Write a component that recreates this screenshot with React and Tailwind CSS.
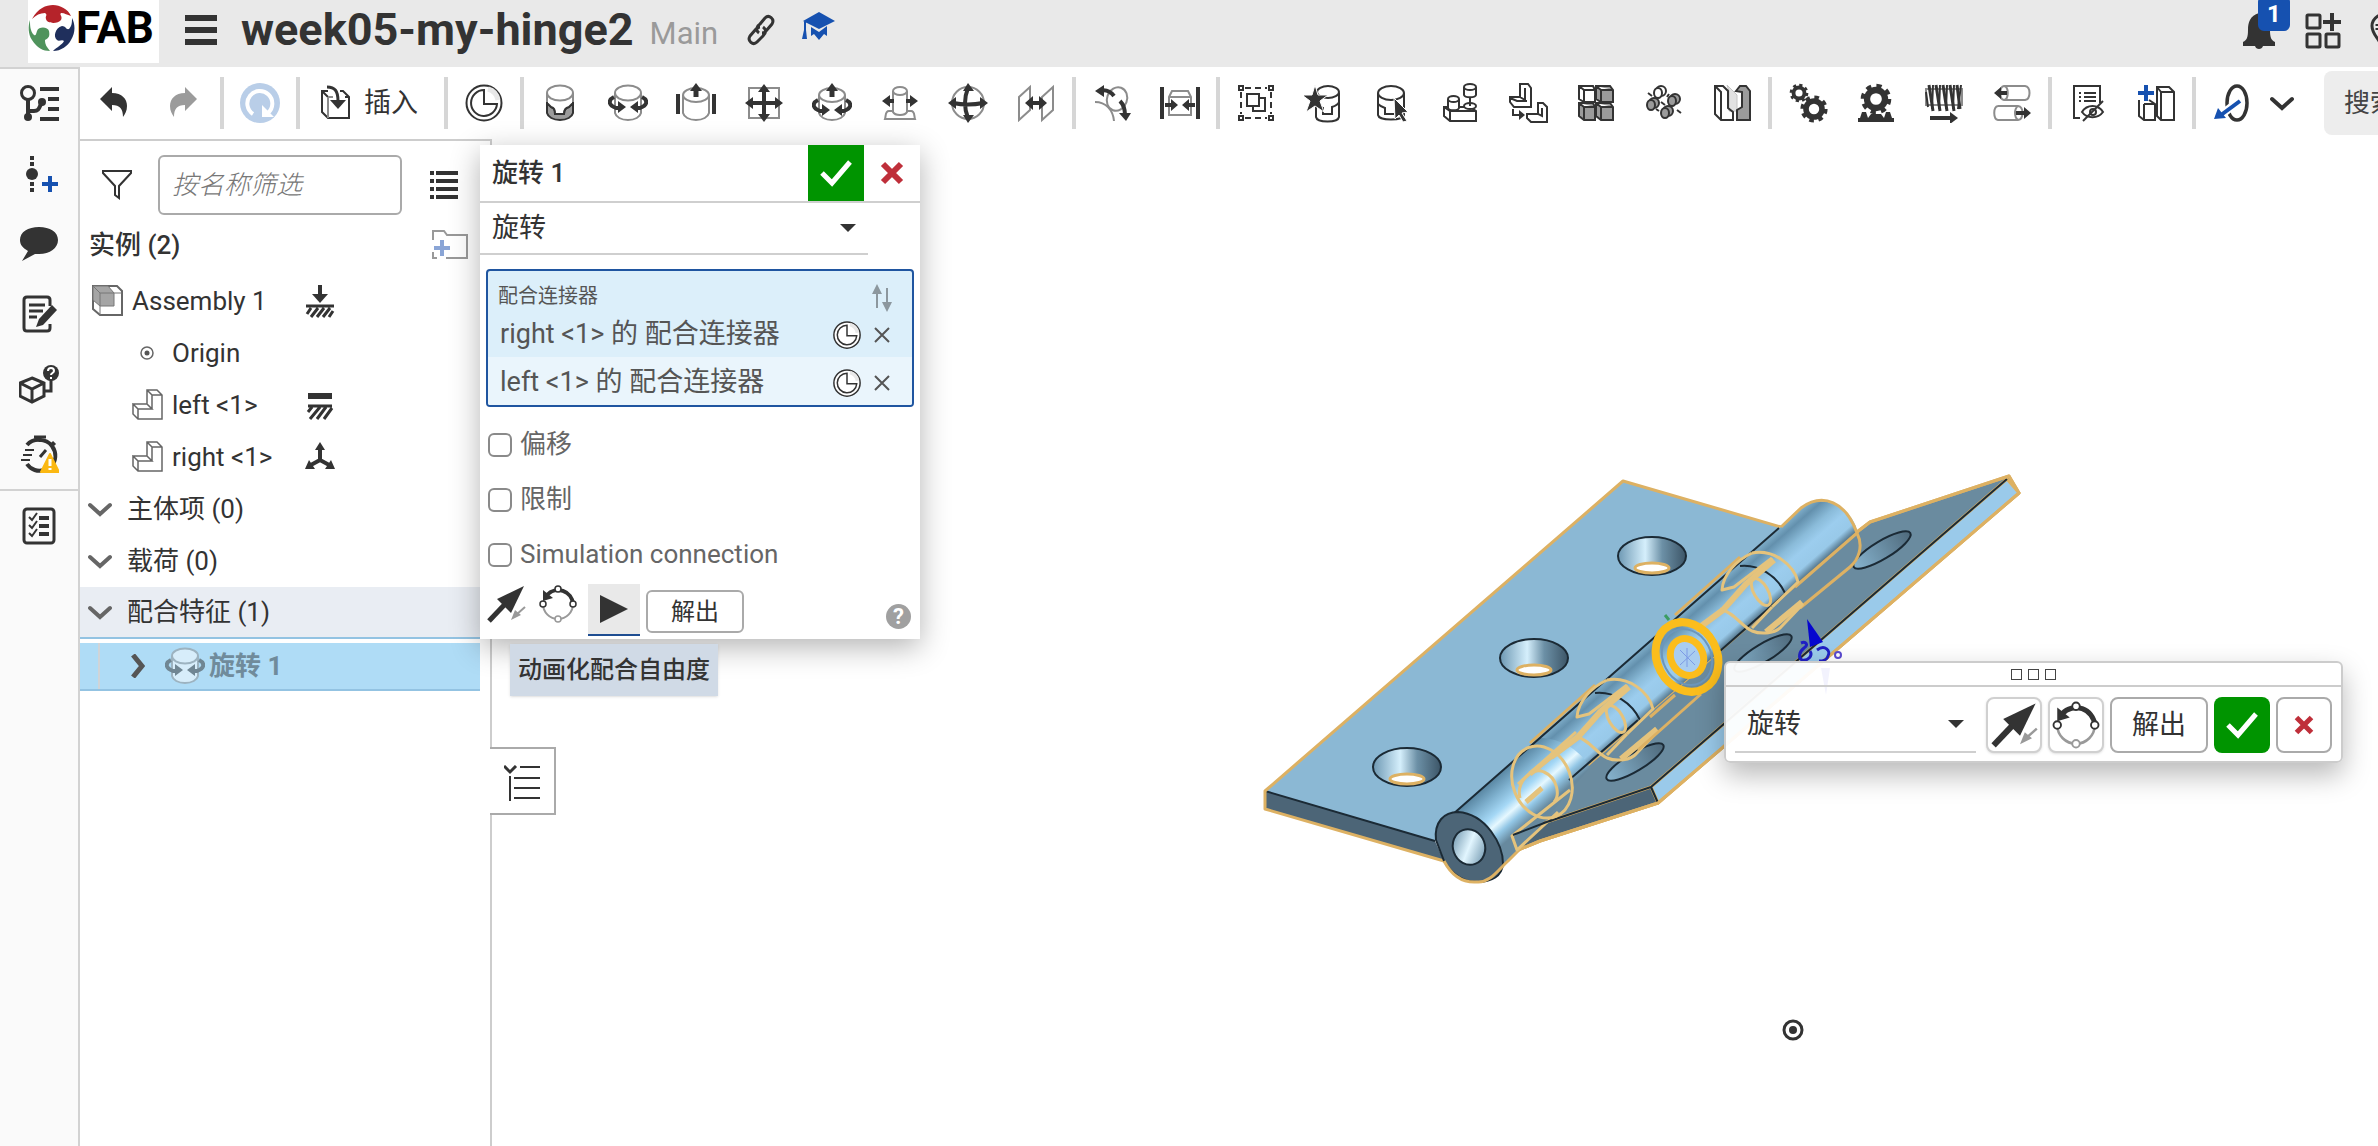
import { useState } from 'react';

const DARK = '#333333';
const GREY = '#8c8c8c';
const BLUE = '#1651b0';

const Icon = ({ children, className = 'size-10', box = '0 0 40 40' }) => (
  <svg viewBox={box} className={`shrink-0 ${className}`} fill="none" stroke={DARK} strokeWidth="2" aria-hidden="true">
    {children}
  </svg>
);

/* ---------- toolbar icons ---------- */

const UndoIcon = () => (
  <Icon><path d="M4 16 L16 4 V10 C26 10 31 16 31 23 C31 28 29 31 27 34 C27 26 24 22 16 22 V28 Z" fill={DARK} stroke="none" /></Icon>
);

const RedoIcon = () => (
  <Icon><path d="M33 16 L21 4 V10 C11 10 6 16 6 23 C6 28 8 31 10 34 C10 26 13 22 21 22 V28 Z" fill="#9b9b9b" stroke="none" /></Icon>
);

const RefreshIcon = () => (
  <Icon>
    <circle cx="20" cy="20" r="20" fill="#b9cee8" stroke="none" />
    <path d="M13 31 A12.5 12.5 0 1 1 28 30" stroke="#fff" strokeWidth="4" />
    <path d="M22 22 V34 H34 Z" fill="#fff" stroke="none" />
  </Icon>
);

const InsertIcon = () => (
  <Icon>
    <path d="M12 8 H6 V29 L12 35 H33 V14 L27 8 H24 M6 8 L12 14 M29 14 H33" />
    <path d="M12 14 V35 M12 14 H17" stroke={GREY} />
    <path d="M11 4 C19 4 22 8 22 18" strokeWidth="3" />
    <path d="M14 17 H30 L22 26 Z" fill={DARK} stroke="none" />
  </Icon>
);

const ConnectorIcon = ({ className }) => (
  <Icon className={className}>
    <circle cx="20" cy="20" r="17.5" fill="#fff" />
    <path d="M24 6 A14 14 0 0 1 34 17" stroke="#e8e8e8" strokeWidth="5" />
    <path d="M20 7 A13 13 0 1 0 33 21 H20 Z" />
  </Icon>
);

const FastenedIcon = () => (
  <Icon>
    <path d="M7 20 L11 24 C14 25 15 26 15 31 H24 C24 26 26 25 29 24 L33 20 V30 C32 34 27 37 20 37 S8 34 7 30 Z" fill="#9b9b9b" />
    <path d="M7 10 V20 L11 24 C14 25 15 26 15 31 H24 C24 26 26 25 29 24 L33 20 V10" fill="#fff" />
    <ellipse cx="20" cy="10" rx="13" ry="7.5" stroke={GREY} fill="#fff" />
    <path d="M7 10 V19 M33 10 V19" stroke={GREY} />
  </Icon>
);

const RevoluteIcon = () => (
  <Icon>
    <path d="M7 10 V30 C8 34 13 37 20 37 S32 34 33 30 V10" stroke={GREY} fill="#fff" />
    <ellipse cx="20" cy="10" rx="13" ry="7.5" stroke={GREY} fill="#fff" />
    <path d="M6 14 C0 17 0 22 8 25 L12 25 M34 14 C40 17 40 22 32 25 L28 25" strokeWidth="4" />
    <path d="M10 18 L18 24 L10 30 Z M30 18 L22 24 L30 30 Z" fill={DARK} stroke="none" />
  </Icon>
);

const SliderIcon = () => (
  <Icon>
    <path d="M7 12 V30 C8 34 13 37 20 37 S32 34 33 30 V12" stroke={GREY} />
    <ellipse cx="20" cy="12" rx="13" ry="7" stroke={GREY} />
    <path d="M2 11 V31 M38 11 V31" strokeWidth="4" />
    <path d="M20 14 V6" strokeWidth="5" />
    <path d="M14 8 L20 0 L26 8 Z" fill={DARK} stroke="none" />
  </Icon>
);

const PlanarIcon = () => (
  <Icon>
    <path d="M5 5 H35 V35 H5 Z" stroke={GREY} />
    <path d="M20 6 V34 M6 20 H34" strokeWidth="4" />
    <path d="M20 1 L26 9 H14 Z M20 39 L26 31 H14 Z M1 20 L9 14 V26 Z M39 20 L31 14 V26 Z" fill={DARK} stroke="none" />
  </Icon>
);

const CylindricalIcon = () => (
  <Icon>
    <path d="M7 12 V30 C8 34 13 37 20 37 S32 34 33 30 V12" stroke={GREY} />
    <ellipse cx="20" cy="12" rx="13" ry="7" stroke={GREY} />
    <path d="M6 17 C0 20 0 25 8 28 L12 28 M34 17 C40 20 40 25 32 28 L28 28" strokeWidth="4" />
    <path d="M10 21 L18 27 L10 33 Z M30 21 L22 27 L30 33 Z M14 8 L20 0 L26 8 Z" fill={DARK} stroke="none" />
    <path d="M20 14 V6" strokeWidth="5" />
  </Icon>
);

const PinSlotIcon = () => (
  <Icon>
    <path d="M13 28 H9 C5 28 6 33 5 36 H35 C34 33 35 28 31 28 H27" stroke={GREY} />
    <path d="M13 8 V29 C15 33 25 33 27 29 V8" stroke={GREY} />
    <ellipse cx="20" cy="8" rx="7" ry="4" stroke={GREY} />
    <path d="M6 18 H14 M26 18 H34" strokeWidth="4" />
    <path d="M2 18 L10 12 V24 Z M38 18 L30 12 V24 Z" fill={DARK} stroke="none" />
  </Icon>
);

const BallIcon = () => (
  <Icon>
    <circle cx="20" cy="20" r="16" stroke={GREY} />
    <path d="M20 5 C16 15 16 25 20 35 M5 20 C15 22 25 22 35 20" strokeWidth="4" />
    <path d="M20 0 L26 8 H15 Z M20 40 L26 32 H15 Z M0 20 L8 14 V26 Z M40 20 L32 14 V26 Z" fill={DARK} stroke="none" />
  </Icon>
);

const ParallelIcon = () => (
  <Icon>
    <path d="M3 14 L14 4 V27 L3 37 Z M26 14 L37 4 V27 L26 37 Z" stroke={GREY} />
    <path d="M14 20 H28" strokeWidth="4" />
    <path d="M9 20 L17 13 V27 Z M31 20 L23 13 V27 Z" fill={DARK} stroke="none" />
  </Icon>
);

const TangentIcon = () => (
  <Icon>
    <ellipse cx="25" cy="16" rx="10" ry="12" stroke={GREY} transform="rotate(20 25 16)" />
    <path d="M3 19 C14 19 21 27 22 38" stroke={GREY} />
    <path d="M7 8 C14 6 19 9 22 13 M28 18 C32 22 33 27 33 32" strokeWidth="4" />
    <path d="M3 8 L12 2 V14 Z M27 30 H39 L34 38 Z" fill={DARK} stroke="none" />
  </Icon>
);

const WidthIcon = () => (
  <Icon>
    <path d="M2 4 V36 M38 4 V36" strokeWidth="4" />
    <path d="M9 14 L12 8 H28 L31 14 V32 H9 Z M9 14 H31" stroke={GREY} />
    <path d="M5 22 H13 M35 22 H27" strokeWidth="4" />
    <path d="M18 22 L11 16 V28 Z M22 22 L29 16 V28 Z" fill={DARK} stroke="none" />
  </Icon>
);

const GroupIcon = () => (
  <Icon>
    <path d="M9 5 H31 M9 35 H31 M5 9 V31 M35 9 V31" strokeDasharray="6 4" />
    <path d="M3 3 H7 V7 H3 Z M33 3 H37 V7 H33 Z M3 33 H7 V37 H3 Z M33 33 H37 V37 H33 Z" fill="#fff" />
    <path d="M17 15 H29 V28 H17 Z" />
    <path d="M11 11 H23 V23 H11 Z" fill="#fff" />
  </Icon>
);

const NamedPositionIcon = () => (
  <Icon>
    <path d="M12 10 V34 C13 40 34 40 35 34 V10" />
    <ellipse cx="24" cy="9" rx="11" ry="6" />
    <path d="M35 19 C34 22 31 23 28 24 V31 H19 V25 C15 24 13 23 12 21" />
    <path d="M11 2 L14 12 L24 12 L16 18 L20 29 L11 23 L2 29 L6 18 L-2 12 L8 12 Z" fill={DARK} stroke="#fff" strokeWidth="1" />
  </Icon>
);

const SelectPartIcon = () => (
  <Icon>
    <path d="M6 10 V32 C7 38 31 38 32 32 V10" />
    <ellipse cx="19" cy="10" rx="13" ry="7" />
    <path d="M6 21 C8 23 10 24 13 25 V31 H22" />
    <path d="M22 15 L36 29 L30 30 L35 38 L31 39 L27 32 L23 36 Z" fill={DARK} stroke="#fff" strokeWidth="1" />
  </Icon>
);

const ReplicateIcon = () => (
  <Icon>
    <path d="M4 24 H30 L36 28 V38 H10 L4 33 Z M4 24 L10 28 H36 M10 28 V38" />
    <path d="M8 16 V25 C9 28 18 28 19 25 V16" fill="#fff" />
    <ellipse cx="13.5" cy="16" rx="5.5" ry="3" fill="#fff" />
    <path d="M24 4 V12 C25 15 35 15 36 12 V4" fill="#fff" />
    <ellipse cx="30" cy="4" rx="6" ry="3" fill="#fff" />
    <ellipse cx="30" cy="23" rx="6" ry="3" fill="#fff" />
    <path d="M30 15 V23" />
  </Icon>
);

const PatternIcon = () => (
  <Icon>
    <path d="M12 1 H20 L23 5 V24 H6 L2 19 V14 H12 Z M12 1 V14 L17 17 V5 M2 15 L9 18 H19" />
    <path d="M30 20 H35 L39 24 V39 H23 L19 35 V31 H30 Z M30 20 V31 L34 33 V25" />
    <path d="M5 26 V32 H12" />
    <path d="M11 27 L17 32 L11 37 Z" fill={DARK} stroke="none" />
  </Icon>
);

const LinearPatternIcon = () => (
  <Icon>
    <path d="M3 3 H17 L19 7 V19 H8 L3 16 Z M3 3 L8 7 H19 M8 7 V19" fill="#fff" />
    <path d="M20 3 H34 L37 7 V19 H25 L20 16 Z M20 3 L25 7 H37 M25 7 V19" fill="#9b9b9b" />
    <path d="M3 20 H17 L19 24 V37 H8 L3 33 Z M3 20 L8 24 H19 M8 24 V37" fill="#9b9b9b" />
    <path d="M20 20 H34 L37 24 V37 H25 L20 33 Z M20 20 L25 24 H37 M25 24 V37" fill="#9b9b9b" />
  </Icon>
);

const CircularPatternIcon = () => (
  <Icon>
    {[[15, 9, '#fff'], [29, 17, '#9b9b9b'], [8, 21, '#9b9b9b'], [22, 29, '#9b9b9b']].map(([x, y, fill]) => (
      <g key={x} fill={fill}>
        <ellipse cx={x + 2} cy={y - 1} rx="5" ry="5" />
        <ellipse cx={x - 1} cy={y + 1} rx="4" ry="5" />
      </g>
    ))}
    <path d="M4 10 L8 13 M17 19 L21 22 M33 27 L37 30 M23 14 L25 11 M12 26 L15 28" />
  </Icon>
);

const ExplodedIcon = () => (
  <Icon>
    <path d="M15 2 L25 12 V28 H17 V8 Z" fill="#e2e2e2" stroke="#c4c4c4" strokeWidth="1" />
    <path d="M3 3 H11 L16 8 V25 L21 29 V37 H9 L3 31 Z M3 3 L9 9 V37" />
    <path d="M24 8 L28 3 H34 L38 8 V37 H25 V27 L30 24 V9 Z" fill="#9b9b9b" />
  </Icon>
);

// teeth are a dashed ring around the gear body
const Gear = ({ x, y, r }) => (
  <g fill="none">
    <circle cx={x} cy={y} r={r} strokeWidth={r * 0.7} />
    <circle cx={x} cy={y} r={r * 1.45} strokeWidth={r * 0.5} strokeDasharray={`${r * 0.57} ${r * 0.569}`} />
  </g>
);

const GearIcon = () => (
  <Icon><Gear x={11} y={10} r={5.5} /><Gear x={26} y={26} r={8} /></Icon>
);

const RackIcon = () => (
  <Icon>
    <Gear x={20} y={16} r={9} />
    <path d="M2 37 H38" strokeWidth="4" />
    <path d="M4 35 L6 29 H10 L12 35 L15 31 H25 L28 35 L30 29 H34 L36 35 Z" fill={DARK} stroke="none" />
  </Icon>
);

const ScrewIcon = () => (
  <Icon>
    <path d="M2 6 H38 V22 L2 22 Z" stroke={GREY} />
    <path d="M5 2 L9 28 M12 2 L16 28 M19 2 L23 28 M26 2 L30 28 M33 2 L36 26" strokeWidth="3" />
    <path d="M9 2 L8 26 M16 2 L15 26 M23 2 L22 26 M30 2 L29 26 M37 2 L34 26 M2 9 L4 24" />
    <path d="M6 35 H28" strokeWidth="4" />
    <path d="M26 29 L34 35 L26 41 Z" fill={DARK} stroke="none" />
  </Icon>
);

const LinearRelationIcon = () => (
  <Icon>
    <path d="M12 3 H33 C39 4 39 16 33 17 H12 C7 16 7 4 12 3 C17 4 17 16 12 17" stroke={GREY} />
    <path d="M6 23 H26 C32 24 32 36 26 37 H6 C1 36 1 24 6 23 M26 23 C22 26 22 34 26 37" stroke={GREY} />
    <path d="M8 10 H15 M24 30 H34" strokeWidth="4" />
    <path d="M2 10 L9 4 V16 Z M39 30 L32 24 V36 Z" fill={DARK} stroke="none" />
  </Icon>
);

const HiddenListIcon = () => (
  <Icon>
    <path d="M12 35 H6 V3 H32 V20" />
    <path d="M11 10 H13 M16 10 H28 M11 14 H13 M16 14 H28 M11 18 H13 M16 18 H28" />
    <path d="M14 29 C19 21 30 21 35 29 C30 36 19 36 14 29 Z" />
    <circle cx="25" cy="29" r="3" />
    <path d="M35 18 L15 38" />
  </Icon>
);

const ConfigurationIcon = () => (
  <Icon>
    <path d="M3 17 V33 L8 37 H19 V21 L13 17 M8 21 H19 M8 21 V37" />
    <path d="M21 4 H33 L38 9 V37 H25 L21 33 Z M25 9 H38 M25 9 V37 M21 4 L25 9" />
    <path d="M10 2 V18 M2 10 H18" stroke={BLUE} strokeWidth="4" />
  </Icon>
);

const MeasureIcon = () => (
  <Icon>
    <ellipse cx="25" cy="20" rx="10" ry="17" strokeWidth="3.5" />
    <path d="M27 18 L9 32" stroke="#fff" strokeWidth="8" />
    <path d="M28 18 L9 32" stroke={BLUE} strokeWidth="4" />
    <path d="M2 36 L6 25 L14 35 Z" fill={BLUE} stroke="none" />
  </Icon>
);

const ChevronDown = ({ className = 'size-6', color = '#666666' }) => (
  <svg viewBox="0 0 24 24" className={`shrink-0 ${className}`} fill="none" stroke={color} strokeWidth="4" strokeLinecap="round" aria-hidden="true">
    <path d="M2 8 L12 17 L22 8" />
  </svg>
);

/* ---------- side rail icons ---------- */

const TreeIcon = () => (
  <Icon>
    <circle cx="9" cy="9" r="6.5" strokeWidth="3" />
    <path d="M9 16 V32 M9 27 H15 C20 27 20 24 22 20" strokeWidth="4" />
    <circle cx="9" cy="33" r="4" fill={DARK} stroke="none" />
    <circle cx="23" cy="18" r="4" fill={DARK} stroke="none" />
    <path d="M21 5 H41 M29 15 H41 M29 25 H41 M21 35 H41" strokeWidth="4" />
  </Icon>
);

const AddFeatureIcon = () => (
  <Icon>
    <path d="M13 2 V6 M13 8 V12 M13 28 V32 M13 34 V38" strokeWidth="4" />
    <circle cx="13" cy="20" r="6" fill={DARK} stroke="none" />
    <path d="M31 22 V38 M23 30 H39" stroke={BLUE} strokeWidth="4" />
  </Icon>
);

const CommentIcon = () => (
  <Icon>
    <path d="M20 3 C31 3 39 8 39 16 C39 24 31 30 20 30 L16 30 L3 37 L9 27 C4 24 1 21 1 16 C1 8 9 3 20 3 Z" fill={DARK} stroke="none" />
  </Icon>
);

const NoteIcon = () => (
  <Icon>
    <path d="M31 12 V6 C31 4 30 3 28 3 H8 C6 3 5 4 5 6 V34 C5 36 6 37 8 37 H28 C30 37 31 36 31 34 V30" strokeWidth="3" />
    <path d="M10 11 H26 M10 17 H24 M10 23 H18" strokeWidth="3" />
    <path d="M33 11 L38 16 L24 31 L17 33 L20 25 Z" fill={DARK} stroke="none" />
  </Icon>
);

const CubeHelpIcon = () => (
  <Icon>
    <path d="M13 14 L25 19 V32 L13 38 L1 32 V19 Z M1 19 L13 25 L25 19 M13 25 V38" strokeWidth="3" />
    <path d="M32 16 V27 H25" strokeWidth="3" />
    <circle cx="32" cy="9" r="8" fill={DARK} stroke="none" />
    <path d="M29 7 C29 3 35 3 35 7 C35 9 32 9 32 11 M32 13 V15" stroke="#fff" />
  </Icon>
);

const StopwatchIcon = () => (
  <Icon>
    <path d="M15 3 H27 M21 3 V8 M33 8 L36 11" strokeWidth="3" />
    <path d="M8 11 C14 4 27 4 33 12 C38 19 37 27 32 33 M8 30 C12 36 19 38 25 36" strokeWidth="4" />
    <path d="M6 16 H15 M4 21 H13 M2 26 H11" />
    <path d="M21 23 L27 16" strokeWidth="3" />
    <path d="M31 20 L40 38 H22 Z" fill="#fbb812" stroke="#fbb812" strokeLinejoin="round" />
    <path d="M31 25 V32 M31 34 V36" stroke="#fff" strokeWidth="3" />
  </Icon>
);

const ChecklistIcon = () => (
  <Icon>
    <rect x="5" y="3" width="30" height="34" rx="3" strokeWidth="3" />
    <path d="M20 12 H30 M20 20 H30 M20 28 H30" strokeWidth="4" />
    <path d="M10 11 L13 14 L18 7 M10 19 L13 22 L18 15 M10 27 L13 30 L18 23" />
  </Icon>
);

/* ---------- tree and dialog icons ---------- */

const PartIcon = () => (
  <Icon className="size-8" box="0 0 32 32">
    <path d="M1 15 L6 20 H20 L15 15 Z M15 1 H25 L30 6 V30 H6 L1 25 V15 H15 Z M15 1 L20 6 V20 M20 6 H30 M6 20 V30" stroke="#666" strokeWidth="1.5" />
  </Icon>
);

const AssemblyIcon = () => (
  <Icon className="size-8" box="0 0 32 32">
    <path d="M1 1 H25 L30 6 V30 H8 L1 24 Z" stroke="#666" />
    <path d="M1 1 H16 L22 8 V21 H8 L1 15 Z" fill="#a5a5a5" stroke="#777" strokeWidth="1" />
    <path d="M1 1 L8 8 H30 M8 8 V30" stroke="#777" strokeWidth="1" />
  </Icon>
);

const Hatch = ({ y }) => (
  <path d={`M2 ${y + 8} L6 ${y + 2} M6 ${y + 11} L13 ${y + 2} M12 ${y + 11} L19 ${y + 2} M18 ${y + 11} L25 ${y + 2} M24 ${y + 11} L28 ${y + 5} M1 ${y} H29`} strokeWidth="3" />
);

const GroundIcon = () => (
  <Icon className="h-[34px] w-[30px]" box="0 0 30 34">
    <path d="M15 1 V11" strokeWidth="4" />
    <path d="M7 10 H23 L15 19 Z" fill={DARK} stroke="none" />
    <Hatch y={22} />
  </Icon>
);

const FixedIcon = () => (
  <Icon className="h-[34px] w-[30px]" box="0 0 30 34">
    <path d="M3 8 H27" strokeWidth="6" />
    <path d="M3 24 L7 19 M5 31 L15 19 M12 31 L21 19 M19 31 L27 20 M3 18 H27" strokeWidth="3" />
  </Icon>
);

const FreeIcon = () => (
  <Icon className="h-[34px] w-[30px]" box="0 0 30 34">
    <path d="M15 6 V20 L4 26 M15 20 L26 26" strokeWidth="4" />
    <path d="M15 2 L20 10 H10 Z M0 29 L4 20 L10 29 Z M30 29 L26 20 L20 29 Z" fill={DARK} stroke="none" />
  </Icon>
);

const FlipIcon = ({ className = 'size-10' }) => (
  <Icon className={className}>
    <path d="M3 37 L22 17" strokeWidth="5" />
    <path d="M38 2 L11 15 L25 29 Z" fill={DARK} stroke="none" />
    <path d="M39 23 L30 31" stroke="#999" />
    <path d="M25 36 L29 26 L35 31 Z" fill="#999" stroke="none" />
  </Icon>
);

const ReorientIcon = ({ className = 'size-10' }) => (
  <Icon className={className}>
    <path d="M5 20 A15 15 0 0 0 35 20" stroke="#999" />
    <path d="M35 20 A15 15 0 0 0 9 11" strokeWidth="4" />
    <path d="M5 17 V6 L15 14 Z" fill={DARK} stroke="none" />
    <g fill="#fff" strokeWidth="1.5">
      <circle cx="20" cy="5" r="3" /><circle cx="5" cy="20" r="3" /><circle cx="35" cy="20" r="3" /><circle cx="20" cy="35" r="3" stroke="#999" />
    </g>
  </Icon>
);

const CheckMark = () => (
  <Icon className="size-8" box="0 0 32 32"><path d="M2 16 L12 26 L30 5" stroke="#fff" strokeWidth="5" /></Icon>
);

const CrossMark = ({ className = 'size-6' }) => (
  <Icon className={className} box="0 0 24 24"><path d="M3 3 L21 21 M21 3 L3 21" stroke="#bf2f3a" strokeWidth="6" /></Icon>
);

const Caret = () => (
  <svg viewBox="0 0 16 8" className="pointer-events-none h-2 w-4 shrink-0" aria-hidden="true"><path d="M0 0 H16 L8 8 Z" fill={DARK} /></svg>
);

/* ---------- page parts ---------- */

const FabLogo = () => (
  <svg viewBox="0 0 48 48" className="size-12 shrink-0" aria-hidden="true">
    <path d="M4 15 C10 4 18 1 25 1 C32 1 40 5 43 12 C39 11 37 9 33 9 C31 11 35 12 33 16 C30 20 19 20 18 15 C17 12 20 11 17 9 C12 9 8 11 4 15 Z" fill="#b5232a" />
    <path d="M2 16 C0 22 0 30 4 36 C9 44 15 47 22 47 C19 43 17 41 17 36 C21 34 22 32 21 27 C20 23 11 22 9 27 C8 30 8 32 6 31 C2 27 2 21 2 16 Z" fill="#4f935c" />
    <path d="M44 14 C47 20 48 28 43 36 C40 42 33 47 25 47 C29 43 34 41 36 37 C34 35 31 38 29 36 C25 33 27 24 34 22 C38 22 38 26 41 25 C44 22 44 18 44 14 Z" fill="#1f2f5c" />
  </svg>
);

const Header = () => (
  <header className="flex h-[67px] shrink-0 items-start overflow-hidden bg-[#e9e9e9]">
    <a href="#home" className="ml-[28px] flex h-[63px] w-[131px] shrink-0 items-center overflow-hidden bg-white pb-2 text-[44px] leading-none font-bold text-black" aria-label="FAB">
      <FabLogo />
      FAB
    </a>
    <button type="button" className="mt-[14px] ml-[26px]" aria-label="Menu">
      <Icon className="size-8" box="0 0 32 32"><path d="M0 4 H32 M0 16 H32 M0 28 H32" strokeWidth="6" /></Icon>
    </button>
    <h1 className="ml-6 shrink-0 text-[45px] leading-[60px] font-bold text-[#333]">week05-my-hinge2</h1>
    <span className="ml-4 pt-1 text-[31px] leading-[60px] text-[#9a9a9a]">Main</span>
    <button type="button" className="mt-[14px] ml-[27px]" aria-label="Copy link">
      <Icon className="size-8" box="0 0 32 32">
        <path d="M14 19 C10 16 12 12 15 10 L20 4 C24 0 30 5 27 10 L21 17 C20 18 19 19 17 19 M18 13 C22 16 21 19 18 22 L12 28 C8 32 2 27 5 22 L11 15 C12 14 13 13 15 13" strokeWidth="3" />
      </Icon>
    </button>
    <button type="button" className="mt-[10px] ml-6" aria-label="Learning center">
      <svg viewBox="0 0 36 32" className="h-8 w-9" fill={BLUE}>
        <path d="M2 11 L18 2 L34 11 L18 19 Z M10 17 L18 22 L26 16 V26 L23 24 L18 30 L13 24 L10 26 Z M3 11 H5 V20 L6 29 H1 L3 20 Z" />
      </svg>
    </button>
    <div className="ml-auto flex shrink-0 items-start">
      <button type="button" className="relative mt-3 mr-7" aria-label="Notifications">
        <svg viewBox="0 0 34 38" className="h-[38px] w-[34px]" fill={DARK}>
          <path d="M17 1 C26 4 28 10 28 18 C28 25 29 28 33 30 V34 H21 C20 38 14 38 13 34 H1 V30 C5 28 6 25 6 18 C6 10 8 4 17 1 Z" />
        </svg>
        <span className="absolute -top-4 left-4 flex h-[35px] w-8 items-center justify-center rounded-md bg-[#1651b0] text-2xl leading-none font-bold text-white">1</span>
      </button>
      <button type="button" className="mt-3 mr-7" aria-label="Apps">
        <svg viewBox="0 0 38 38" className="size-[38px]" fill="none" stroke={DARK} strokeWidth="3">
          <rect x="3" y="3" width="13" height="13" rx="1" />
          <rect x="3" y="22" width="13" height="13" rx="1" />
          <rect x="22" y="22" width="13" height="13" rx="1" />
          <path d="M28 1 V19 M19 10 H37" strokeWidth="4" />
        </svg>
      </button>
      <button type="button" className="mt-3 w-2 overflow-hidden" aria-label="Help">
        <svg viewBox="0 0 40 40" className="size-10" fill="none" stroke={DARK} strokeWidth="3">
          <path d="M12 38 C12 28 2 24 2 14 C2 6 10 1 20 1" />
          <path d="M7 12 V18" strokeDasharray="2 2" />
        </svg>
      </button>
    </div>
  </header>
);

const railItems = [
  ['Instances', TreeIcon],
  ['Add feature', AddFeatureIcon],
  ['Comments', CommentIcon],
  ['Notes', NoteIcon],
  ['Part help', CubeHelpIcon],
  ['Performance', StopwatchIcon],
];

const SideRail = () => (
  <nav className="flex w-[80px] shrink-0 flex-col border-t-2 border-r-2 border-[#d2d2d2] bg-[#fafafa]">
    <div className="border-b-2 border-[#d2d2d2]">
      {railItems.map(([label, Glyph]) => (
        <button key={label} type="button" aria-label={label} className="flex h-[70px] w-full items-center justify-center">
          <Glyph />
        </button>
      ))}
    </div>
    <button type="button" aria-label="Checklist" className="flex h-[70px] w-full items-center justify-center">
      <ChecklistIcon />
    </button>
  </nav>
);

const mateTools = [
  ['Fastened', FastenedIcon], ['Revolute', RevoluteIcon], ['Slider', SliderIcon], ['Planar', PlanarIcon],
  ['Cylindrical', CylindricalIcon], ['Pin slot', PinSlotIcon], ['Ball', BallIcon], ['Parallel', ParallelIcon],
];
const tangentTools = [['Tangent', TangentIcon], ['Width', WidthIcon]];
const groupTools = [
  ['Group', GroupIcon], ['Named positions', NamedPositionIcon], ['Select', SelectPartIcon], ['Replicate', ReplicateIcon],
  ['Pattern', PatternIcon], ['Linear pattern', LinearPatternIcon], ['Circular pattern', CircularPatternIcon], ['Exploded view', ExplodedIcon],
];
const relationTools = [['Gear', GearIcon], ['Rack and pinion', RackIcon], ['Screw', ScrewIcon], ['Linear', LinearRelationIcon]];
const viewTools = [['Hidden list', HiddenListIcon], ['Configurations', ConfigurationIcon]];

const ToolGroup = ({ tools }) =>
  tools.map(([label, Glyph]) => (
    <button key={label} type="button" aria-label={label} className="flex h-full w-[68px] shrink-0 items-center justify-center">
      <Glyph />
    </button>
  ));

const Divider = () => <span className="mx-[2px] h-[52px] w-1 shrink-0 bg-[#d6d6d6]" />;

const Toolbar = () => (
  <div className="flex h-[72px] shrink-0 items-center overflow-hidden bg-white pl-[2px]">
    <ToolGroup tools={[['Undo', UndoIcon], ['Redo', RedoIcon]]} />
    <Divider />
    <ToolGroup tools={[['Refresh', RefreshIcon]]} />
    <Divider />
    <button type="button" className="flex h-full w-[140px] shrink-0 items-center gap-2 pl-[14px] text-[27px] text-[#333]">
      <InsertIcon />
      插入
    </button>
    <Divider />
    <ToolGroup tools={[['Mate connector', ConnectorIcon]]} />
    <Divider />
    <ToolGroup tools={mateTools} />
    <Divider />
    <ToolGroup tools={tangentTools} />
    <Divider />
    <ToolGroup tools={groupTools} />
    <Divider />
    <ToolGroup tools={relationTools} />
    <Divider />
    <ToolGroup tools={viewTools} />
    <Divider />
    <ToolGroup tools={[['Measure', MeasureIcon]]} />
    <button type="button" aria-label="More" className="flex h-full w-8 shrink-0 items-center justify-center">
      <ChevronDown color={DARK} />
    </button>
    <input
      type="text"
      aria-label="搜索工具"
      placeholder="搜索工具..."
      className="ml-[26px] h-16 min-w-0 flex-1 rounded-l-lg bg-[#ededed] pl-5 text-[26px] text-[#333] outline-none placeholder:text-[#444]"
    />
  </div>
);

const InstanceRow = ({ icon, label, status, className }) => (
  <li className={`flex h-[52px] items-center ${className}`}>
    <span className="flex w-10 shrink-0 items-center">{icon}</span>
    <span className="flex-1">{label}</span>
    {status && <span className="mr-[155px]">{status}</span>}
  </li>
);

const SectionRow = ({ label, className = '' }) => (
  <button type="button" className={`flex h-[52px] w-full items-center gap-[15px] pl-2 text-left ${className}`}>
    <ChevronDown />
    {label}
  </button>
);

const FeaturePanel = () => {
  const [filter, setFilter] = useState('');

  return (
    <aside className="w-[412px] shrink-0 border-t-2 border-r-2 border-[#cdcdcd] bg-white text-[26px] text-[#333]">
      <div className="flex items-center pt-[14px] pl-[22px]">
        <Icon className="size-[30px]" box="0 0 30 30"><path d="M1 1 H29 V3 L17 16 V28 L13 25 V16 L1 3 Z" /></Icon>
        <input
          type="text"
          aria-label="按名称筛选"
          placeholder="按名称筛选"
          value={filter}
          onChange={(e) => setFilter(e.target.value)}
          className="ml-[26px] h-[60px] w-[244px] rounded-md border-2 border-[#aaa] px-3 font-light italic outline-none placeholder:text-[#777]"
        />
        <button type="button" aria-label="List view" className="ml-[28px]">
          <Icon className="size-7" box="0 0 28 28"><path d="M0 2 H4 M6 2 H28 M0 10 H4 M6 10 H28 M0 18 H4 M6 18 H28 M0 26 H4 M6 26 H28" strokeWidth="4" /></Icon>
        </button>
      </div>
      <div className="flex h-[60px] items-center justify-between pr-[22px] pl-[9px]">
        <h2 className="font-medium">实例 (2)</h2>
        <button type="button" aria-label="New folder">
          <Icon className="h-[30px] w-[36px]" box="0 0 36 30">
            <path d="M1 10 V1 H12 L15 5 H35 V28 H14 M1 22 V28 H5" stroke="#999" />
            <path d="M10 10 V26 M2 18 H18" stroke="#8aa5d6" strokeWidth="4" />
          </Icon>
        </button>
      </div>
      <ul>
        <InstanceRow className="pl-3" icon={<AssemblyIcon />} label="Assembly 1" status={<GroundIcon />} />
        <InstanceRow
          className="pl-[52px]"
          icon={<Icon className="ml-2 size-[14px]" box="0 0 14 14"><circle cx="7" cy="7" r="6" stroke="#666" strokeWidth="1.5" /><circle cx="7" cy="7" r="2.5" fill="#555" stroke="none" /></Icon>}
          label="Origin"
        />
        <InstanceRow className="pl-[52px]" icon={<PartIcon />} label="left <1>" status={<FixedIcon />} />
        <InstanceRow className="pl-[52px]" icon={<PartIcon />} label="right <1>" status={<FreeIcon />} />
      </ul>
      <SectionRow label="主体项 (0)" />
      <SectionRow label="载荷 (0)" />
      <SectionRow label="配合特征 (1)" className="border-b-2 border-[#93c3e2] bg-[#e9edf3]" />
      <div className="mr-[10px] mt-1 flex h-[48px] items-center border-b-2 border-[#93c3e2] bg-[#afdcf6]">
        <span className="ml-[18px] h-full w-[2px] bg-[#cfd4d8]" />
        <svg viewBox="0 0 14 24" className="ml-[31px] h-6 w-[14px]" fill="none" stroke="#555" strokeWidth="5" aria-hidden="true"><path d="M2 1 L11 12 L2 23" /></svg>
        <span className="ml-[20px] opacity-50"><RevoluteIcon /></span>
        <span className="ml-1 font-bold text-[#708b9b]">旋转 1</span>
      </div>
    </aside>
  );
};

const TypeSelect = ({ label, className }) => (
  <div className={`flex items-center border-[#cfcfcf] ${className}`}>
    <select aria-label={label} defaultValue="revolute" className="min-w-0 flex-1 appearance-none bg-transparent text-[27px] text-[#333] outline-none">
      <option value="revolute">旋转</option>
      <option value="slider">滑块</option>
    </select>
    <Caret />
  </div>
);

const ConnectorRow = ({ label, className = '' }) => (
  <li className={`flex h-[48px] items-center pt-[3px] pr-[22px] pl-3 text-[27px] text-[#555] ${className}`}>
    <span className="flex-1">{label}</span>
    <ConnectorIcon className="mr-[12px] size-[30px]" />
    <button type="button" aria-label="Remove">
      <Icon className="size-4" box="0 0 16 16"><path d="M1 1 L15 15 M15 1 L1 15" stroke="#555" /></Icon>
    </button>
  </li>
);

const Option = ({ id, label }) => (
  <div className="flex h-[55px] items-center gap-[8px]">
    <input id={id} type="checkbox" className="size-6 appearance-none rounded-md border-2 border-[#8a8a8a] bg-white" />
    <label htmlFor={id}>{label}</label>
  </div>
);

const MateDialog = () => (
  <section className="absolute top-[6px] left-[400px] w-[440px] bg-white shadow-[0_8px_28px_rgba(0,0,0,0.3)]">
    <div className="flex h-[58px] border-b-2 border-[#cfcfcf]">
      <h2 className="flex flex-1 items-center pl-3 text-[26px] font-medium text-[#333]">旋转 1</h2>
      <button type="button" aria-label="Accept" className="flex w-14 items-center justify-center bg-[#009400]"><CheckMark /></button>
      <button type="button" aria-label="Cancel" className="flex w-14 items-center justify-center"><CrossMark /></button>
    </div>
    <TypeSelect label="Mate type" className="mr-[52px] h-[52px] border-b-2 px-3" />
    <div className="mx-[6px] mt-[14px] overflow-hidden rounded border-2 border-[#1f55a0] bg-[#dceffa]">
      <div className="flex h-[38px] items-center justify-between pt-3 pr-5 pl-[10px] text-[20px] text-[#555]">
        配合连接器
        <button type="button" aria-label="Swap" className="pt-1">
          <Icon className="h-[28px] w-[20px]" box="0 0 20 28">
            <path d="M5 6 V24 M15 4 V20" stroke="#8c979e" />
            <path d="M0 10 L5 0 L10 10 Z M10 18 H20 L15 28 Z" fill="#8c979e" stroke="none" />
          </Icon>
        </button>
      </div>
      <ul>
        <ConnectorRow label="right <1> 的 配合连接器" />
        <ConnectorRow label="left <1> 的 配合连接器" className="bg-[#eaf5fc]" />
      </ul>
    </div>
    <div className="px-2 pt-[10px] text-[26px] text-[#666]">
      <Option id="offset" label="偏移" />
      <Option id="limits" label="限制" />
      <Option id="simulation" label="Simulation connection" />
    </div>
    <div className="flex h-[57px] items-start pt-[2px] pl-[6px]">
      <button type="button" aria-label="Flip axis"><FlipIcon /></button>
      <button type="button" aria-label="Reorient" className="ml-3"><ReorientIcon /></button>
      <button type="button" aria-label="Animate" className="ml-[10px] flex h-[52px] w-[52px] items-center justify-center border-b-2 border-[#1f4e92] bg-[#e9e9e9]">
        <svg viewBox="0 0 28 28" className="size-7"><path d="M0 0 L28 14 L0 28 Z" fill={DARK} /></svg>
      </button>
      <button type="button" className="mt-[6px] ml-[6px] h-[43px] w-[98px] rounded-md border-2 border-[#aaa] text-[24px] leading-none text-[#333]">解出</button>
      <button type="button" aria-label="Help" className="mt-[20px] mr-[9px] ml-auto flex size-[25px] items-center justify-center rounded-full bg-[#a0a0a0] text-[22px] leading-none font-bold text-white">?</button>
    </div>
  </section>
);

// one knuckle outline, drawn again at every joint of the barrel
const Knuckle = ({ dx, dy }) => (
  <g transform={`translate(${dx} ${dy})`} stroke="#e5c37c">
    <path d="M500 116 C519 114 537 126 545 143" stroke="#1b2a35" strokeWidth="2" />
    <path d="M512 103 C534 99 554 115 558 132 L532 157" />
    <path d="M512 103 C497 110 483 124 482 140 L494 137 L532 108" />
    <path d="M456 180 L483 160 L506 134 L534 110" strokeWidth="6" />
    <ellipse cx="521" cy="142" rx="7" ry="15" transform="rotate(-30 521 142)" />
    <path d="M480 159 C494 162 501 176 512 181 C522 185 536 183 541 177 L563 154" />
    <path d="M532 157 L512 178" />
    <path d="M526 182 L562 152" strokeWidth="6" />
  </g>
);

const HingeModel = () => (
  <svg viewBox="0 0 800 460" className="absolute top-[311px] left-[748px] h-[460px] w-[800px]" fill="none" stroke="#ddb163" strokeWidth="3" strokeLinejoin="round" role="img" aria-label="Hinge">
    <defs>
      <linearGradient id="barrel" gradientUnits="userSpaceOnUse" x1="376" y1="221" x2="411" y2="261">
        <stop offset="0" stopColor="#7eadc9" />
        <stop offset="0.15" stopColor="#6390ad" />
        <stop offset="0.4" stopColor="#8abbd9" />
        <stop offset="0.6" stopColor="#9ccdee" />
        <stop offset="0.85" stopColor="#98c9e9" />
        <stop offset="1" stopColor="#587a90" />
      </linearGradient>
      <linearGradient id="shine" gradientUnits="userSpaceOnUse" x1="238" y1="342" x2="275" y2="384">
        <stop offset="0" stopColor="#5885a1" />
        <stop offset="0.25" stopColor="#7eb0ce" />
        <stop offset="0.5" stopColor="#a5d8f6" />
        <stop offset="0.65" stopColor="#e6f8ff" />
        <stop offset="0.8" stopColor="#93c7e6" />
        <stop offset="1" stopColor="#67899e" />
      </linearGradient>
      <linearGradient id="bore" x1="0" x2="1" y1="0" y2="1">
        <stop offset="0" stopColor="#5d86a0" />
        <stop offset="0.5" stopColor="#e2f6ff" />
        <stop offset="1" stopColor="#5d86a0" />
      </linearGradient>
      <linearGradient id="sink" x1="0" x2="1" y1="0" y2="0">
        <stop offset="0" stopColor="#6d98b3" />
        <stop offset="0.4" stopColor="#d5effc" />
        <stop offset="0.65" stopColor="#6c90a6" />
        <stop offset="1" stopColor="#3c5567" />
      </linearGradient>
      <linearGradient id="slot" x1="0" x2="1" y1="0" y2="0">
        <stop offset="0" stopColor="#86b3ce" />
        <stop offset="1" stopColor="#4f6a7c" />
      </linearGradient>
    </defs>

    {/* far leaf */}
    <path d="M617 82 L630 72 L769 26 L779 43 L418 353 L300 391 L278 400 L268 384 Z" fill="#6a8b9f" />
    <path d="M767 29 L779 43 L418 353 L411 337 Z" fill="#9acaea" />
    <path d="M411 337 L418 353 L300 391 L278 400 L274 383 Z" fill="#4c6577" />
    <path d="M767 29 L411 337 L274 383 M411 337 L418 353" stroke="#1b2a35" strokeWidth="2" />
    <path d="M617 82 L630 72 L769 26 L779 43 L418 353 L300 391 L278 400" />
    {[[642, 100], [523, 203], [395, 312]].map(([x, y]) => (
      <ellipse key={x} cx={x} cy={y} rx="33" ry="9" transform={`rotate(-31 ${x} ${y})`} fill="url(#slot)" stroke="#1b2a35" strokeWidth="2" />
    ))}

    {/* near leaf */}
    <path d="M383 31 L541 77 L212 365 L195 391 L25 341 Z" fill="#8bb8d4" stroke="none" />
    <path d="M25 341 L195 391 L204 411 L25 359 Z" fill="#4c6577" stroke="none" />
    <path d="M25 341 L195 391" stroke="#1b2a35" strokeWidth="2" />
    <path d="M541 77 L383 31 L25 341 V359 L204 411" />
    {[[412, 106], [294, 208], [167, 317]].map(([x, y]) => (
      <g key={x}>
        <ellipse cx={x} cy={y} rx="34" ry="19" fill="url(#sink)" stroke="#1b2a35" strokeWidth="2" />
        <ellipse cx={x} cy={y + 12} rx="17" ry="5" fill="#fff" />
      </g>
    ))}

    {/* barrel */}
    <path d="M541 77 L561 58 C585 40 616 62 617 83 L268 384 L212 365 Z" fill="url(#barrel)" stroke="none" />
    <path d="M212 365 L300 288 C322 288 342 302 350 318 L281 398 L252 428 Z" fill="url(#shine)" stroke="none" />
    <path d="M539 78 L212 365 M545 144 L480 201 M398 270 L329 330" stroke="#1b2a35" strokeWidth="2" />
    <path d="M541 77 L561 58 C583 42 606 52 617 83 C624 97 618 110 610 117 L560 158" />
    <path d="M617 83 L555 137 M500 107 L435 165 M355 235 L290 293" />
    <path d="M196 390 C194 372 204 362 218 362 C246 364 263 394 263 414 C262 426 252 432 237 432 C222 432 212 424 204 411 Z" fill="#4c6577" stroke="#1b2a35" strokeWidth="2" />
    <ellipse cx="229" cy="397" rx="16" ry="18" transform="rotate(-20 229 397)" fill="url(#bore)" stroke="#1b2a35" strokeWidth="2" />
    <path d="M204 411 C213 428 224 433 237 432 C250 433 258 420 268 411 L281 398" />

    <Knuckle dx={0} dy={0} />
    <Knuckle dx={-145} dy={127} />
    <g stroke="#e5c37c">
      <ellipse cx="302" cy="332" rx="29" ry="37" transform="rotate(-22 302 332)" />
      <path d="M280 348 C276 332 292 316 304 322 C318 328 320 346 314 352" />
      <path d="M286 352 L302 338 M290 324 L312 306" strokeWidth="5" />
      <path d="M336 282 L278 334 M330 340 L272 386 L277 400 L318 362" />
      <path d="M273 385 L312 370" stroke="#1b2a35" strokeWidth="2" />
    </g>
    <path d="M461 244 L398 300 M435 245 L410 267" />

    {/* selected mate connector */}
    <g stroke="#fbbd1c" transform="rotate(-28 447 207)">
      <ellipse cx="447" cy="207" rx="30" ry="36" strokeWidth="8" />
      <ellipse cx="447" cy="207" rx="24" ry="29" stroke="#6c96bb" strokeWidth="2" />
      <ellipse cx="447" cy="207" rx="16" ry="19" strokeWidth="7" fill="#a9cdf0" />
    </g>
    <path d="M440 200 L455 215 M455 201 L440 215 M447 198 V217" stroke="#7d9be6" strokeWidth="1" />
    <path d="M425 165 L429 170" stroke="#3c9c62" />

    {/* rotation handle */}
    <path d="M567 169 L583 192 L570 197 Z" fill="#0505cf" stroke="none" />
    <path d="M561 193 C566 191 569 195 564 198 C559 202 558 208 562 210 C568 211 573 206 570 201 M577 200 C585 194 591 201 588 206 C587 210 583 211 579 211" stroke="#2020c4" strokeWidth="3" />
    <circle cx="598" cy="205" r="3" stroke="#5a4ad0" strokeWidth="2" />
    <path d="M581 218 L590 218 L586 245 Z" fill="#0505cf" stroke="none" />
  </svg>
);

const FloatingBar = () => (
  <section className="absolute top-[522px] right-[35px] w-[619px] rounded-md border-2 border-[#ccc] bg-white/95 shadow-[0_12px_28px_rgba(0,0,0,0.28)]">
    <div className="flex h-6 items-center justify-center gap-[6px] border-b-2 border-[#ccc]">
      <span className="size-[11px] border border-[#444]" />
      <span className="size-[11px] border border-[#444]" />
      <span className="size-[11px] border border-[#444]" />
    </div>
    <div className="flex items-center gap-[6px] px-[9px] pt-[10px] pb-2">
      <TypeSelect label="Quick mate type" className="mr-1 h-[56px] flex-1 border-b-2 pr-3 pl-3" />
      <button type="button" aria-label="Flip axis" className="flex size-14 items-center justify-center rounded-lg border-2 border-[#d0d0d0] bg-white shadow"><FlipIcon className="size-12" /></button>
      <button type="button" aria-label="Reorient" className="flex size-14 items-center justify-center rounded-lg border-2 border-[#d0d0d0] bg-white shadow"><ReorientIcon className="size-[50px]" /></button>
      <button type="button" className="h-14 w-[98px] rounded-lg border-2 border-[#aaa] bg-white text-[27px] text-[#333]">解出</button>
      <button type="button" aria-label="Accept" className="flex size-14 items-center justify-center rounded-lg bg-[#009400]"><CheckMark /></button>
      <button type="button" aria-label="Cancel" className="flex size-14 items-center justify-center rounded-lg border-2 border-[#aaa] bg-white"><CrossMark className="size-5" /></button>
    </div>
  </section>
);

const Canvas = () => (
  <main className="relative min-w-0 flex-1 bg-white">
    <HingeModel />
    <svg viewBox="0 0 24 24" className="absolute top-[879px] left-[1289px] size-6" fill="none" aria-hidden="true">
      <circle cx="12" cy="12" r="9" stroke={DARK} strokeWidth="3" />
      <circle cx="12" cy="12" r="4" fill={DARK} />
    </svg>
    <button type="button" aria-label="Display panel" className="absolute top-[608px] -left-[2px] flex h-[68px] w-[66px] items-center justify-center border-2 border-l-0 border-[#aaa] bg-white pt-1">
      <Icon className="size-9" box="0 0 36 36">
        <path d="M0 1 L6 7 L12 1" strokeWidth="3" />
        <path d="M6 11 V36 M16 2 H36 M10 13 H36 M10 23 H36 M10 33 H36" />
      </Icon>
    </button>
    <FloatingBar />
  </main>
);

const App = () => (
  <div className="flex h-screen flex-col overflow-hidden bg-white font-['Roboto','Noto_Sans_CJK_SC',sans-serif]">
    <Header />
    <div className="flex min-h-0 flex-1">
      <SideRail />
      <div className="flex min-w-0 flex-1 flex-col">
        <Toolbar />
        <div className="relative flex min-h-0 flex-1">
          <FeaturePanel />
          <Canvas />
          <MateDialog />
          <div role="tooltip" className="absolute top-[505px] left-[430px] flex h-[52px] items-center bg-[#d0dae6] px-2 text-[24px] font-medium text-[#333] shadow">
            动画化配合自由度
          </div>
        </div>
      </div>
    </div>
  </div>
);

export default App;
